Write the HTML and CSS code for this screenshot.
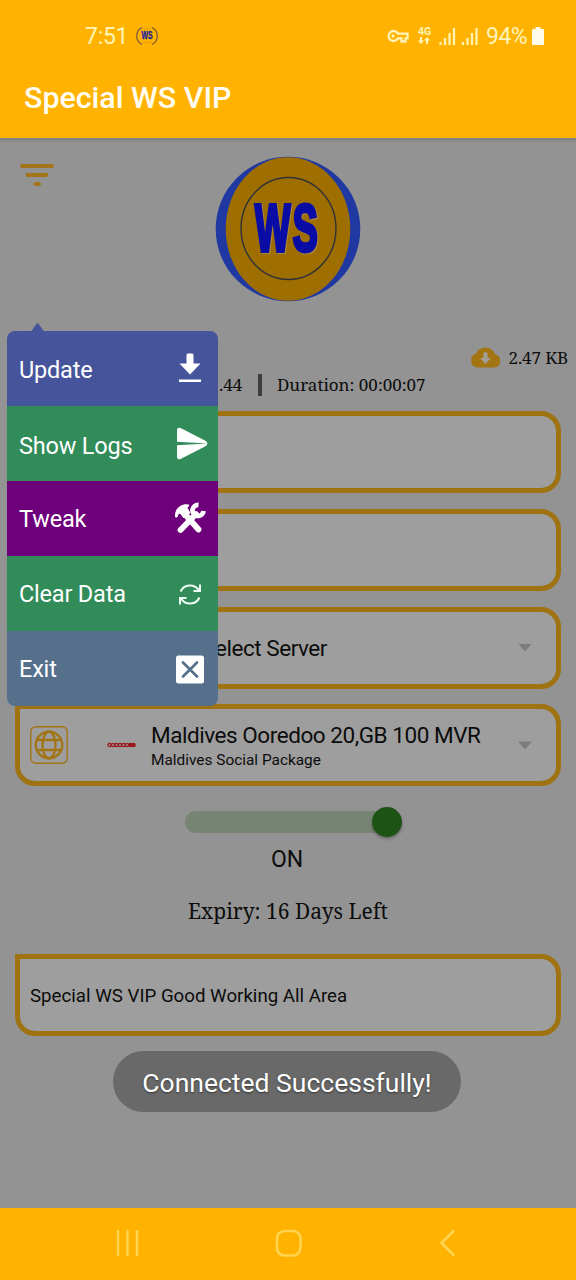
FILE: index.html
```html
<!DOCTYPE html>
<html lang="en">
<head>
<meta charset="utf-8">
<title>Special WS VIP</title>
<link rel="stylesheet" href="styles.css">
</head>
<body>
<div class="phone">
  <header class="top">
    <div class="status">
      <span class="clock">7:51</span>
      <svg class="mini" width="22" height="20" viewBox="0 0 22 20"><path d="M6 1.500A9.500 9.500 0 0 0 6 18.500M16 1.500A9.500 9.500 0 0 1 16 18.500" fill="none" stroke="#7d5a3c" stroke-width="1.300"/><path d="M7.500 2.500h7M7.500 16.500h7" stroke="#c88a20" stroke-dasharray="1.500 1.500"/><text x="5.500" y="13" textLength="11" lengthAdjust="spacingAndGlyphs" class="mini-text">WS</text></svg>
      <svg class="signals" width="104" height="24" viewBox="0 0 104 24">
        <g fill="none" stroke="#fff3b8" stroke-width="2.300"><path d="M12 9.700A5 5 0 1 0 12 14.300H15.500V17.500H19.500V14.300H21.500V9.700Z"/></g><circle cx="7" cy="12" r="1.700" fill="#fff3b8"/>
        <text x="32" y="10.500" class="net">4G</text>
        <path d="M35 13v5M41 20v-5" stroke="#fff3b8" stroke-width="2"/><path d="M31.800 16.500h6.400L35 20zM37.800 16.500h6.400L41 13z" fill="#fff3b8"/>
        <path d="M54.500 21v-3M59 21v-7M63.500 21V9M68 21V4M77 21v-3M81.500 21v-7M86 21V9M90.500 21V4" stroke="#fff3b8" stroke-width="2.200"/>
      </svg>
      <span class="percent">94%</span>
      <svg class="battery" width="12" height="18" viewBox="0 0 12 18"><path d="M3.500 0h5v2H11q1 0 1 1v14q0 1-1 1H1q-1 0-1-1V3q0-1 1-1h2.500z" fill="#fffbe8"/></svg>
    </div>
    <h1 class="title">Special WS VIP</h1>
  </header>

  <main class="content">
    <div class="hero">
      <svg class="filter" width="34" height="24" viewBox="0 0 34 24"><path d="M2 3h30M7.500 12h19M15.500 21h3.500" stroke="#a27519" stroke-width="4" stroke-linecap="round"/></svg>
      <svg class="logo" width="146" height="146" viewBox="0 0 146 146">
        <circle cx="73" cy="73" r="72.300" fill="#1f38a2"/>
        <ellipse cx="73" cy="73" rx="62.300" ry="71.800" fill="#9e6f00"/>
        <ellipse cx="73.500" cy="72.500" rx="47.500" ry="51" fill="none" stroke="#303136" stroke-width="1.400"/>
        <text x="40" y="95" textLength="65" lengthAdjust="spacingAndGlyphs" class="logo-text">WS</text>
      </svg>
    </div>

    <div class="data">
      <svg width="31" height="22" viewBox="0 0 31 22"><path d="M7.500 21.500A7.200 7.200 0 0 1 6 7.500 10.200 10.200 0 0 1 25 8.500 6.600 6.600 0 0 1 24.500 21.500Z" fill="#a27512"/><path d="M13.500 6.500h4v5.500h3.300l-5.300 6-5.300-6h3.300z" fill="#a3a09a"/></svg>
      <span>2.47 KB</span>
    </div>
    <div class="session"><span class="upload">.44</span><i class="bar"></i><span class="duration">Duration: 00:00:07</span></div>

    <section class="cards">
      <div class="card"></div>
      <div class="card"></div>
      <div class="card server"><span class="server-name">Select Server</span><i class="caret"></i></div>
      <div class="card network">
        <svg class="globe" width="38" height="38" viewBox="0 0 38 38" fill="none" stroke="#a27414"><rect x=".8" y=".8" width="36.400" height="36.400" rx="5" stroke-width="1.400"/><g stroke-width="2.300"><circle cx="19" cy="19" r="13.300"/><ellipse cx="19" cy="19" rx="6.500" ry="13.300"/><path d="M7 14h24M7 24h24"/></g></svg>
        <svg class="carrier" width="29" height="6" viewBox="0 0 29 6" fill="none" stroke="#9c171d" stroke-width="1.300"><circle cx="2.500" cy="3" r="1.600"/><circle cx="6" cy="3" r="1.600"/><circle cx="9.500" cy="3" r="1.600"/><circle cx="13" cy="3" r="1.600"/><circle cx="16.500" cy="3" r="1.600"/><circle cx="20" cy="3" r="1.600"/><circle cx="23.500" cy="3" r="1.600" fill="#9c171d"/><circle cx="26.500" cy="3" r="1.600" fill="#9c171d"/></svg>
        <div class="plan"><span class="plan-name">Maldives Ooredoo 20,GB 100 MVR</span><span class="plan-sub">Maldives Social Package</span></div>
        <i class="caret"></i>
      </div>
    </section>

    <div class="switch"><i class="thumb"></i></div>
    <div class="state">ON</div>
    <div class="expiry">Expiry: 16 Days Left</div>
    <div class="card note"><span>Special WS VIP Good Working All Area</span></div>
    <div class="toast"><span>Connected Successfully!</span></div>
  </main>

  <nav class="nav">
    <svg width="24" height="28" viewBox="0 0 24 28"><path d="M2 1v26M11.500 1v26M21 1v26"/></svg>
    <svg width="28" height="28" viewBox="0 0 28 28"><rect x="2" y="2" width="23.500" height="24.500" rx="7.500"/></svg>
    <svg width="18" height="28" viewBox="0 0 18 28"><path d="M16 1.500 3.500 14l12.500 12.500"/></svg>
  </nav>

  <aside class="menu">
    <div class="item update"><span>Update</span><svg width="36" height="36" viewBox="0 0 36 36" fill="#fff"><path d="M14.500 5q0-1.500 1.500-1.500h4q1.500 0 1.500 1.500v8.500H28.500L18 24.500 7.500 13.500h7z"/><path d="M7 29.500h22v2.500H7z"/></svg></div>
    <div class="item logs"><span>Show Logs</span><svg width="36" height="36" viewBox="0 0 36 36" fill="#fff"><path d="M5 16.800V5.500q0-3.500 3.500-2.500L33 15.500q2.500 1.300 2.500 3L5 16.800zM5 20.200l30.500-1.700q0 1.700-2.500 3L8.500 34Q5 35 5 31.500z"/></svg></div>
    <div class="item tweak"><span>Tweak</span><svg width="36" height="36" viewBox="0 0 36 36" fill="none" stroke="#fff"><path d="M8.500 30 24 14" stroke-width="5.800" stroke-linecap="round"/><path d="M26.500 5A5.500 5.500 0 1 0 31.500 11" stroke-width="4.800"/><path d="m12 13 14.500 16.500" stroke-width="5.800" stroke-linecap="round"/><path d="M3.500 17Q3 9 9 6q3-2 8-1L15 8l3 5-6 5-4-5-2 1-1 3z" fill="#fff" stroke-width="1"/></svg></div>
    <div class="item clear"><span>Clear Data</span><svg width="36" height="36" viewBox="0 0 36 36" fill="none" stroke="#effff5" stroke-width="2"><path d="M8.500 15.500A10.500 10.500 0 0 1 27 14.500M28 8.500v6.500h-6.500M27.500 21.500A10.500 10.500 0 0 1 9 22.500M8 28.500v-6.500h6.500"/></svg></div>
    <div class="item exit"><span>Exit</span><svg width="36" height="36" viewBox="0 0 36 36"><rect x="4" y="4.500" width="28" height="28" rx="2.500" fill="#fff"/><path d="m11 11.500 14 14M25 11.500l-14 14" stroke="#56708b" stroke-width="2.700" stroke-linecap="round"/></svg></div>
  </aside>
</div>
</body>
</html>
```
FILE: styles.css
```css
* { box-sizing: border-box; }
body { margin: 0; font-family: Roboto, "Liberation Sans", sans-serif; color: #0c0c0c; }
.phone { position: relative; width: 576px; height: 1280px; display: flex; flex-direction: column; background: #939393; overflow: hidden; white-space: nowrap; }

.top { height: 138px; flex: none; background: #ffb300; }
.status { height: 72px; display: flex; align-items: center; padding-left: 85px; color: #fff3b8; font-size: 23px; }
.clock { width: 51px; letter-spacing: -.3px; }
.signals { margin-left: 228px; }
.percent { width: 46px; margin-left: -4px; letter-spacing: -.5px; }
.mini-text { font: bold 10px "Liberation Sans", sans-serif; fill: #22259c; stroke: #22259c; stroke-width: .4; }
.net { font: bold 10.500px Roboto, sans-serif; fill: #fff3b8; }
.title { margin: 0; padding-left: 24px; font-size: 30.400px; line-height: 51px; font-weight: 500; color: #fffdf2; }

.content { height: 1070px; flex: none; display: flex; flex-direction: column; background: linear-gradient(#7c7c7c, #939393 5px); }
.hero { height: 206px; display: flex; align-items: flex-start; padding: 18px 0 0 20px; }
.filter { margin-top: 7px; }
.logo { margin-left: 161px; overflow: visible; }
.logo-text { font: bold 66px "Liberation Sans", sans-serif; letter-spacing: 4px; fill: #0a0da4; stroke: #0a0da4; stroke-width: 4; filter: drop-shadow(1px 1px 0 #b18a38); }

.data, .session, .expiry { font-family: "Noto Serif", "DejaVu Serif Condensed", "DejaVu Serif", serif; }
.data { height: 26px; display: flex; align-items: center; justify-content: flex-end; gap: 8px; padding-right: 8px; font-size: 17px; letter-spacing: -.1px; }
.session { height: 29px; display: flex; align-items: center; padding-left: 219px; font-size: 17px; }
.upload { width: 39px; }
.bar { width: 4px; height: 22px; background: #3d3d3d; margin-right: 15px; }

.cards { display: flex; flex-direction: column; gap: 15.800px; padding: 12px 15px 0; }
.card { height: 82px; display: flex; align-items: center; border: 5px solid #9f7212; border-radius: 0 20px 20px 20px; background: #9e9e9e; }
.server { padding: 0 24px 0 182px; justify-content: space-between; }
.server-name { font-size: 22.500px; letter-spacing: -.45px; }
.caret { width: 14px; height: 8px; background: #7c7c7c; clip-path: polygon(0 0, 100% 0, 50% 100%); }
.network { padding: 0 24px 0 10px; }
.carrier { margin-left: 39px; }
.plan { margin-left: 15px; display: flex; flex-direction: column; flex: 1; padding-top: 2px; }
.plan-name { font-size: 22.500px; line-height: 28px; letter-spacing: -.45px; }
.plan-sub { font-size: 15.400px; line-height: 23px; }

.switch { width: 217px; height: 22px; margin: 25px 0 0 185px; display: flex; align-items: center; justify-content: flex-end; border-radius: 11px; background: #778474; }
.thumb { width: 30px; height: 30px; border-radius: 50%; background: #1d5315; box-shadow: 0 2px 3px rgba(0,0,0,.3); }
.state { margin-top: 12px; padding-right: 2px; text-align: center; font-size: 23px; line-height: 30px; }
.expiry { margin-top: 21px; text-align: center; font-size: 21px; line-height: 30px; }
.note { margin: 28px 15px 0; padding: 2px 0 0 10px; flex: none; font-size: 18.700px; }
.toast { width: 348px; height: 61px; margin: 15px 0 0 113px; padding-top: 2px; border-radius: 31px; background: #696969; display: flex; align-items: center; justify-content: center; font-size: 26.500px; color: #fff; text-shadow: 0 1px 2px rgba(0,0,0,.5); }

.nav { height: 72px; display: flex; align-items: center; padding: 0 120px 2px 116px; justify-content: space-between; background: #ffb300; }
.nav svg { fill: none; stroke: #ffd451; stroke-width: 2.500; }

.menu { position: absolute; left: 7px; top: 330.500px; width: 210.500px; }
.menu::before { content: ""; position: absolute; left: 24px; top: -8px; width: 13px; height: 9px; background: #46549b; clip-path: polygon(50% 0, 100% 100%, 0 100%); }
.item { height: 75.200px; display: flex; align-items: center; justify-content: space-between; padding: 0 10px 0 12px; color: #fff; font-size: 23.500px; letter-spacing: -.2px; }
.item span { padding-top: 4px; }
.update { border-radius: 8px 8px 0 0; background: #46549b; }
.logs, .clear { background: #318c5a; }
.logs span { padding-top: 5px; }
.tweak { background: #6e007c; }
.tweak span, .clear span, .exit span { padding-top: 1px; }
.exit { background: #56708b; border-radius: 0 0 8px 8px; }
```
